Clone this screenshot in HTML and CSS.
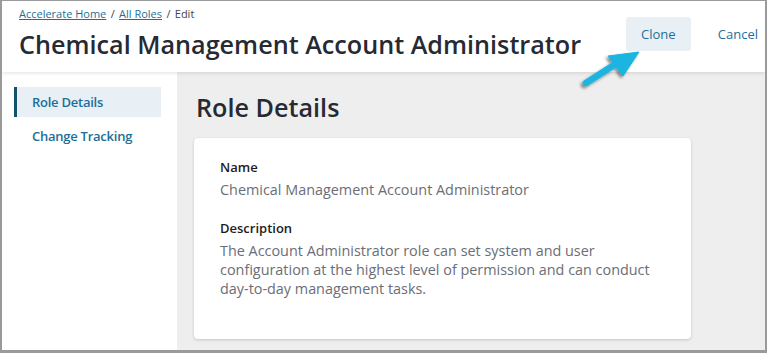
FILE: index.html
```html
<!DOCTYPE html>
<html lang="en">
<head>
    <meta charset="UTF-8">
    <meta name="viewport" content="width=device-width, initial-scale=1.0">
    <title>Edit Role</title>
    <link rel="stylesheet" href="styles.css">
</head>
<body>
    <div class="frame">
        <header class="page-header">
            <div class="header-text">
                <nav class="breadcrumb">
                    <a href="#">Accelerate Home</a>
                    <span class="sep">/</span>
                    <a href="#">All Roles</a>
                    <span class="sep">/</span>
                    <span>Edit</span>
                </nav>
                <h1>Chemical Management Account Administrator</h1>
            </div>
            <div class="actions">
                <button class="btn btn-clone">Clone</button>
                <button class="btn btn-link">Cancel</button>
            </div>
        </header>

        <div class="body">
            <aside class="sidebar">
                <a href="#" class="nav-item active">Role Details</a>
                <a href="#" class="nav-item">Change Tracking</a>
            </aside>
            <main class="content">
                <h2>Role Details</h2>
                <section class="card">
                    <div class="field">
                        <div class="label">Name</div>
                        <div class="value">Chemical Management Account Administrator</div>
                    </div>
                    <div class="field">
                        <div class="label">Description</div>
                        <div class="value">The Account Administrator role can set system and user configuration at the highest level of permission and can conduct day-to-day management tasks.</div>
                    </div>
                </section>
            </main>
        </div>

        <!-- callout arrow pointing at the Clone button -->
        <svg class="callout" width="70" height="50" viewBox="0 0 70 50">
            <defs>
                <filter id="shadow" x="-30%" y="-30%" width="160%" height="160%">
                    <feDropShadow dx="-2" dy="2" stdDeviation="1.6" flood-color="#000" flood-opacity="0.45"/>
                </filter>
            </defs>
            <g filter="url(#shadow)" fill="#1ab4e0" stroke="#1ab4e0">
                <line x1="9" y1="35" x2="37" y2="17" stroke-width="6.5" stroke-linecap="round"/>
                <polygon points="62,4 31,8 46,28" stroke-width="1" stroke-linejoin="round"/>
            </g>
        </svg>
    </div>
</body>
</html>
```

FILE: styles.css
```css
* {
    box-sizing: border-box;
}
body {
    margin: 0;
    font-family: "Open Sans", Arial, sans-serif;
    background: #fff;
}
.frame {
    position: relative;
    width: 767px;
    height: 353px;
    border-style: solid;
    border-color: #9a9a9a;
    border-width: 1px 2px 3px 2px;
    display: flex;
    flex-direction: column;
    overflow: hidden;
}
.page-header {
    height: 71px;
    display: flex;
    justify-content: space-between;
    padding: 0 7px 0 17px;
    background: #fff;
    box-shadow: 0 1px 4px rgba(0,0,0,0.12);
    position: relative;
    z-index: 1;
}
.breadcrumb {
    font-size: 11px;
    color: #444;
    margin-top: 5px;
    line-height: 16px;
}
.breadcrumb a {
    color: #1d6f99;
}
.breadcrumb .sep {
    margin: 0 1.5px;
}
h1 {
    margin: 5px 0 0;
    font-size: 25.2px;
    font-weight: 600;
    color: #262a33;
    line-height: 34px;
}
.actions {
    display: flex;
    align-items: flex-start;
    gap: 27px;
    padding-top: 16px;
}
.btn {
    font-family: inherit;
    font-size: 13px;
    color: #1d6f99;
    border: none;
    background: none;
    height: 34px;
    padding: 0 10px;
    cursor: pointer;
    border-radius: 3px;
}
.btn-clone {
    width: 65px;
    background: #e8f0f6;
}
.btn-link {
    padding: 0;
}
.body {
    flex: 1;
    display: flex;
}
.sidebar {
    width: 175px;
    background: #fff;
    padding: 15px 16px 0 12px;
    display: flex;
    flex-direction: column;
    gap: 4px;
}
.nav-item {
    display: block;
    height: 30px;
    line-height: 30px;
    padding-left: 15px;
    font-size: 13px;
    font-weight: 600;
    letter-spacing: -0.25px;
    color: #1d6f99;
    text-decoration: none;
    border-left: 3px solid transparent;
}
.nav-item.active {
    background: #e8f0f6;
    border-left-color: #16506f;
}
.content {
    flex: 1;
    background: #eeeeee;
    padding: 18px 74px 0 17px;
}
h2 {
    margin: 0 0 13px 2px;
    font-size: 25.2px;
    font-weight: 600;
    color: #262a33;
    line-height: 35px;
}
.card {
    background: #fff;
    border-radius: 4px;
    box-shadow: 0 1px 3px rgba(0,0,0,0.18);
    height: 201px;
    padding: 20px 26px;
}
.field {
    margin-bottom: 20px;
}
.label {
    font-size: 13px;
    font-weight: 600;
    color: #1c1c22;
    line-height: 19px;
}
.value {
    font-size: 14.4px;
    color: #6b6e76;
    line-height: 19px;
    margin-top: 3px;
}
.callout {
    position: absolute;
    left: 575px;
    top: 47px;
    z-index: 2;
}
```
